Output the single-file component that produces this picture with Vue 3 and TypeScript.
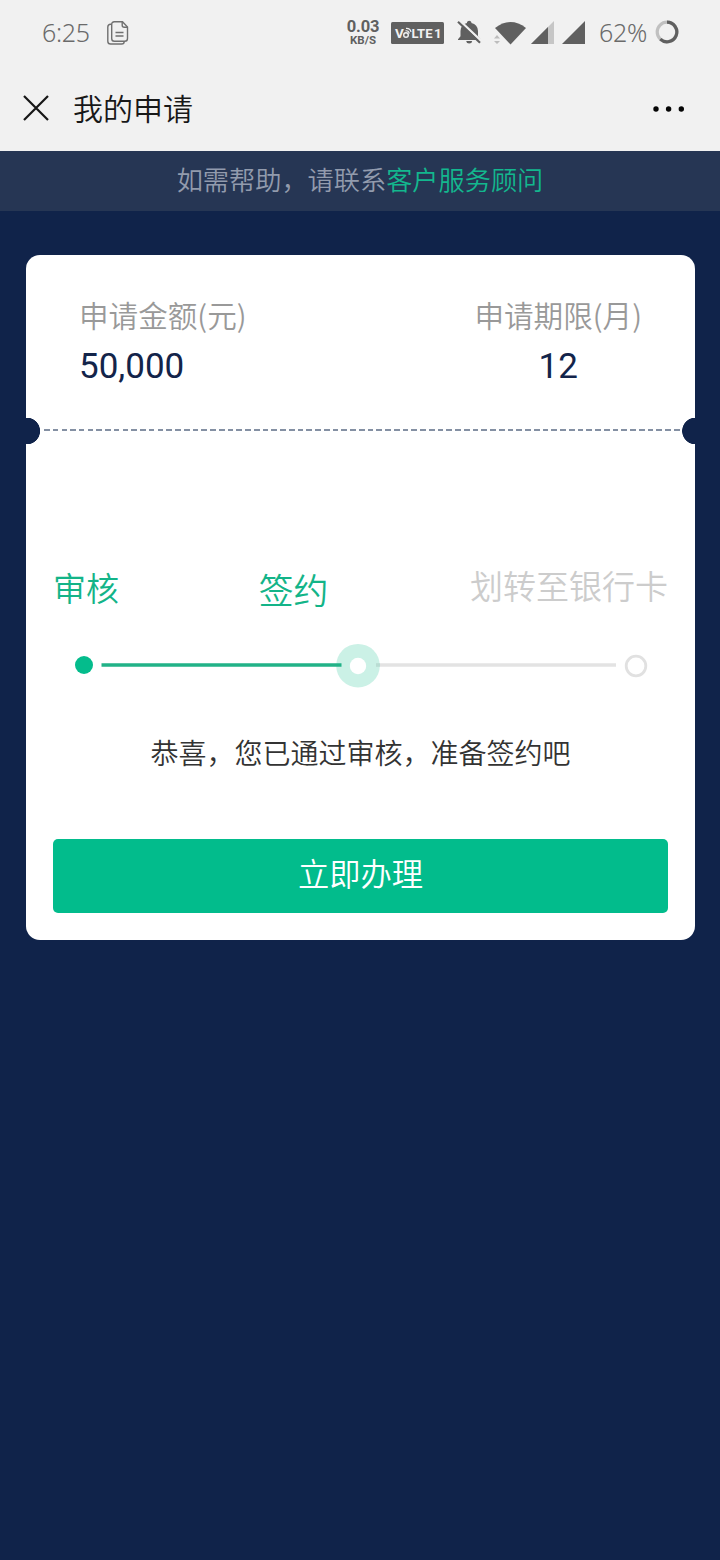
<script setup lang="ts">
interface Step {
  label: string
  state: 'done' | 'current' | 'pending'
}

const steps: Step[] = [
  { label: '审核', state: 'done' },
  { label: '签约', state: 'current' },
  { label: '划转至银行卡', state: 'pending' },
]
</script>

<template>
  <div class="screen">
    <header class="top">
      <div class="status">
        <span class="clock">6:25</span>
        <svg class="docs" width="22" height="24" viewBox="0 0 22 24" fill="none" stroke="#707070" stroke-width="1.4">
          <path d="M4.500 3.200H3.600Q.800 3.200.800 6v14.200Q.800 23 3.600 23h11q2.600 0 2.600-2.600" />
          <path d="M7.300.800h8.200l5 5.200v11.400q0 2.800-2.800 2.800H7.300q-2.600 0-2.600-2.800V3.400Q4.700.800 7.300.800z" />
          <path d="M15.200.900v3.300q0 2 2 2h3.200M8.500 11.500h8M8.500 15h8" />
        </svg>
        <div class="speed">
          <span class="rate">0.03</span>
          <span class="unit">KB/S</span>
        </div>
        <svg class="volte" width="53" height="22" viewBox="0 0 53 22">
          <rect width="53" height="22" rx="1.500" fill="#606060" />
          <g fill="#f1f1f1" font-family="Roboto, sans-serif" font-size="13.500" font-weight="700">
            <text x="4" y="15.800">V</text>
            <text x="20.500" y="15.800" textLength="21" lengthAdjust="spacingAndGlyphs">LTE</text>
            <text x="43" y="15.800">1</text>
          </g>
          <g fill="none" stroke="#f1f1f1" stroke-width="1.400">
            <circle cx="15" cy="13" r="2.300" />
            <path d="M14.500 8.800q3.200-.300 3.800 2.700M15 6.300q4.200-.300 5 3.700" stroke-width="1.200" />
          </g>
        </svg>
        <svg class="bell" width="25" height="25" viewBox="0 0 25 25">
          <path d="M3.500 16.200V11Q3.800 4.300 10 3V2.200Q10.300.700 12.200.700t2.200 1.500V3Q20.600 4.300 21 11v5.200l2.500 3v.8H1v-.8z" fill="#606060" />
          <path d="M9.200 21h6q-.300 2.500-3 2.500t-3-2.500z" fill="#606060" />
          <path d="M1.500-.500 25.500 22.200" stroke="#f1f1f1" stroke-width="2.400" />
          <path d="M0-.500V7L4 5z" fill="#f1f1f1" />
          <path d="M1 1.700 23 22.700" stroke="#606060" stroke-width="2.100" />
        </svg>
        <svg class="wifi" width="33" height="24" viewBox="0 0 33 24">
          <path d="M1 7Q16.500-4.800 32 7L16.500 23.500z" fill="#606060" />
          <path d="M0 17.500 3 14l3 3.500zM0 20l3 3 3-3z" fill="#bdbdbd" />
        </svg>
        <svg class="signal" width="23" height="23" viewBox="0 0 23 23">
          <path d="M0 23 23 0v23z" fill="#c6c6c6" />
          <path d="M0 23 17 6v17z" fill="#606060" />
        </svg>
        <svg class="signal second" width="23" height="23" viewBox="0 0 23 23">
          <path d="M0 23 23 0v23z" fill="#606060" />
        </svg>
        <span class="percent">62%</span>
        <svg class="battery" width="24" height="24" viewBox="0 0 24 24" fill="none" stroke-width="3.200">
          <circle cx="12" cy="12" r="9.800" stroke="#c0c0c0" />
          <path d="M12 2.200a9.800 9.800 0 1 1-6.700 16.950" stroke="#606060" />
        </svg>
      </div>
      <nav class="titlebar">
        <svg width="26" height="26" viewBox="0 0 26 26" stroke="#161616" stroke-width="2.200">
          <path d="m1 1 24 24M25 1 1 25" />
        </svg>
        <h1>我的申请</h1>
        <svg class="more" width="32" height="6" viewBox="0 0 32 6" fill="#050505">
          <circle cx="3" cy="3" r="2.700" />
          <circle cx="15.600" cy="3" r="2.700" />
          <circle cx="28.300" cy="3" r="2.700" />
        </svg>
      </nav>
    </header>

    <div class="help">如需帮助，请联系<a>客户服务顾问</a></div>

    <main class="card">
      <section class="summary">
        <div class="item">
          <span class="label">申请金额(元)</span>
          <span class="value">50,000</span>
        </div>
        <div class="item term">
          <span class="label">申请期限(月)</span>
          <span class="value">12</span>
        </div>
      </section>
      <div class="tear"><i></i></div>
      <section class="progress">
        <div class="labels">
          <span v-for="step in steps" :key="step.label" :class="step.state">{{ step.label }}</span>
        </div>
        <svg class="track" width="615" height="46" viewBox="0 0 615 46">
          <circle cx="31" cy="22" r="9" fill="#04bc8c" />
          <circle cx="305" cy="22.700" r="21.800" fill="#cbf1e6" />
          <path d="M48.500 22H288.500" stroke="#21b287" stroke-width="3.600" />
          <path d="M323 22H327" stroke="#b9ddd3" stroke-width="3.600" />
          <path d="M327 22H563" stroke="#e3e3e3" stroke-width="3.600" />
          <circle cx="305" cy="23" r="8.200" fill="#fff" />
          <circle cx="583" cy="23" r="9.800" fill="#fff" stroke="#e1e1e1" stroke-width="2.800" />
        </svg>
        <p>恭喜，您已通过审核，准备签约吧</p>
        <button type="button">立即办理</button>
      </section>
    </main>
  </div>
</template>

<style>
body {
  margin: 0;
  background: #10234a;
}
</style>

<style scoped>
.screen {
  height: 1560px;
  overflow: hidden;
  background: #10234a;
  font-family: Roboto, "Noto Sans CJK SC", sans-serif;
}
.top {
  height: 150.500px;
  background: #f1f1f1;
}
.status {
  display: flex;
  align-items: center;
  height: 65px;
  padding-left: 42px;
  color: #6a6a6a;
}
.status svg {
  flex: none;
}
.clock,
.percent {
  width: 49px;
  margin-top: -2px;
  font: 350 25px/34px "Noto Sans", sans-serif;
  letter-spacing: -0.300px;
  white-space: nowrap;
}
.docs {
  margin-left: 16px;
}
.speed {
  display: flex;
  flex-direction: column;
  align-items: center;
  width: 32px;
  margin: -1px 12px 0 218px;
  color: #606060;
  font-weight: 700;
}
.rate {
  font-size: 16.500px;
  line-height: 15px;
  letter-spacing: -0.200px;
}
.unit {
  font-size: 11.500px;
  line-height: 12px;
}
.bell {
  margin-left: 13px;
}
.wifi {
  margin-left: 12px;
}
.signal {
  margin-left: 4px;
}
.signal.second {
  margin-left: 8px;
}
.percent {
  margin-left: 14px;
}
.battery {
  margin: -1px 0 0 6.500px;
}
.titlebar {
  display: flex;
  align-items: center;
  height: 85px;
  padding: 0 35px 0 23px;
}
h1 {
  margin: -2px auto 0 24px;
  color: #181818;
  font: 350 30px/40px "Noto Sans CJK SC", sans-serif;
}
.more {
  margin-top: 2px;
}
.help {
  height: 60.500px;
  color: #929bad;
  background: #263654;
  font: 350 26.200px/56px "Noto Sans CJK SC", sans-serif;
  text-align: center;
}
.help a {
  color: #13b78e;
}
.card {
  box-sizing: border-box;
  width: 669px;
  height: 685px;
  margin: 44px 0 0 26px;
  border-radius: 14px;
  overflow: hidden;
  background: #fff;
}
.summary {
  display: flex;
  justify-content: space-between;
  box-sizing: border-box;
  height: 163px;
  padding: 40px 53px 0;
}
.item {
  display: flex;
  flex-direction: column;
}
.term {
  align-items: center;
}
.label {
  color: #999;
  font: 350 29.600px/40px "Noto Sans CJK SC", sans-serif;
}
.value {
  margin-top: 10px;
  color: #13244a;
  font-size: 35px;
  line-height: 44px;
}
.tear {
  display: flex;
  align-items: center;
  height: 26px;
  background:
    radial-gradient(circle at 0.700px 13px, #10234a 13px, transparent 13.700px),
    radial-gradient(circle at 669.500px 13px, #10234a 13px, transparent 13.700px);
}
.tear i {
  flex: 1;
  height: 2px;
  margin: -2px 13px 0 18px;
  background: repeating-linear-gradient(90deg, #8490a3 0 5.500px, transparent 5.500px 8.750px);
}
.progress {
  padding: 118px 27px 0;
}
.labels {
  display: flex;
  justify-content: space-between;
  height: 50px;
  font: 350 33px/50px "Noto Sans CJK SC", sans-serif;
}
.labels .done {
  color: #13b488;
}
.labels .current {
  margin-left: -2px;
  padding-top: 2px;
  color: #13b488;
  font-size: 34.800px;
}
.labels .pending {
  margin-top: -2px;
  color: #ccc;
}
.track {
  display: block;
  margin-top: 31px;
}
p {
  margin: 43px 0 0;
  color: #333;
  font: 350 28px/40px "Noto Sans CJK SC", sans-serif;
  text-align: center;
}
button {
  display: block;
  width: 615px;
  height: 74px;
  margin-top: 67px;
  padding: 0 0 6px;
  border: 0;
  border-radius: 5px;
  color: #fff;
  background: #02bc8c;
  font: 350 31.300px/68px "Noto Sans CJK SC", sans-serif;
}
</style>
